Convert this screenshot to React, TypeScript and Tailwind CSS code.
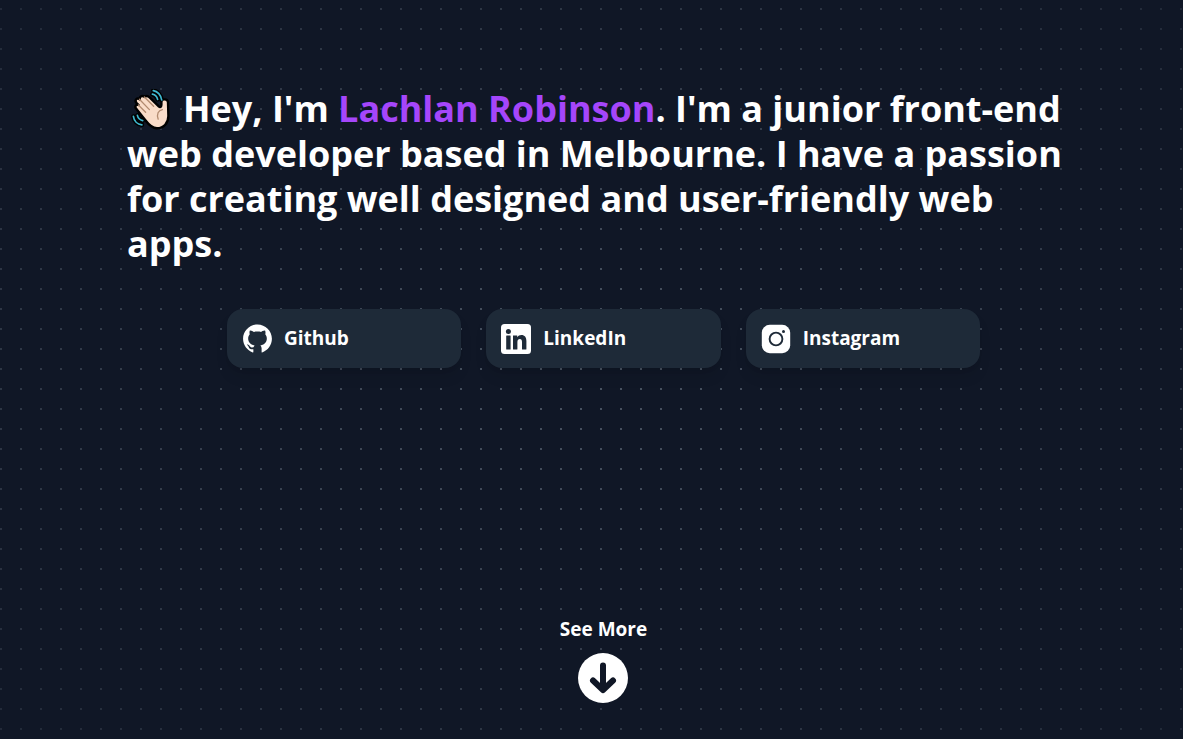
import { AiFillGithub } from "react-icons/ai";

function LinkedInIcon() {
  return (
    <svg viewBox="0 0 30 30" aria-hidden="true" className="size-[30px]">
      <rect width="30" height="30" rx="3.5" fill="#fff" />
      <g fill="#1e2a38">
        <circle cx="7.4" cy="7.6" r="2.5" />
        <rect x="5.2" y="11.4" width="4.4" height="14" rx="0.5" />
        <path d="M12 11.4h4.2v1.8c1-1.5 2.4-2.2 4.2-2.2 3.3 0 5 2.2 5 6v7.9a.5.5 0 0 1-.5.5h-3.4a.5.5 0 0 1-.5-.5v-6.8c0-2.2-.7-3.2-2.1-3.2-1.6 0-2.5 1.1-2.5 3.2v6.8a.5.5 0 0 1-.5.5h-3.4a.5.5 0 0 1-.5-.5z" />
      </g>
    </svg>
  );
}

function InstagramIcon() {
  return (
    <svg viewBox="0 0 30 30" aria-hidden="true" className="size-[30px]">
      <rect x="0.8" y="0.8" width="28.4" height="28.4" rx="8" fill="#fff" />
      <circle cx="15" cy="15" r="6.4" fill="none" stroke="#1e2a38" strokeWidth="1.9" />
      <circle cx="22.5" cy="7.5" r="1.5" fill="#1e2a38" />
    </svg>
  );
}

const links = [
  { name: "Github", href: "https://github.com", icon: <AiFillGithub size={33} className="shrink-0" /> },
  { name: "LinkedIn", href: "https://linkedin.com", icon: <LinkedInIcon /> },
  { name: "Instagram", href: "https://instagram.com", icon: <InstagramIcon /> },
];

const motionLines =
  "M22.3 1.6C26.5 2.2 30 6 30.7 11M21.4 5.2C24.2 5.8 26 7.8 26.6 10.4M2.4 27.4C3 32 6.4 35.4 10.9 35.8M6.4 26.4C7 29.2 9 31 11.7 31.6";

function WavingHand() {
  return (
    <svg
      viewBox="0 0 40 42"
      role="img"
      aria-label="Waving hand"
      className="mr-3 ml-1 inline-block h-[42px] w-10 align-[-9px]"
    >
      <path d={motionLines} fill="none" stroke="#000" strokeWidth="4.5" strokeLinecap="round" />
      <path
        d="M5.8 20.4C2.8 17.8 5 14.8 7.6 16L5.4 13.8C3.2 11 6 8.2 8.6 10.2C8.6 7 11.6 6 13.6 8C15 6.6 17 6.8 18.6 8.4L28 17.6C29.6 19 30.4 17.4 30.4 15.4V12.6C31 9.6 36.6 9.6 37 13.2L37.4 27C37.4 34 32.8 39.2 26 39.2C20.6 39.2 17.2 35 14.2 31Z"
        fill="#f9dcc8"
        stroke="#000"
        strokeWidth="2.4"
        strokeLinejoin="round"
      />
      <path
        d="M8.4 10.2L18.4 20.6M13.4 8L22.6 17.2M7.4 16L14.6 23.2M31.4 20.6C27.2 21.4 25.4 25 27.2 30.2"
        fill="none"
        stroke="#b28b70"
        strokeWidth="1.3"
        strokeLinecap="round"
      />
      <path d={motionLines} fill="none" stroke="#3fb8d0" strokeWidth="1.7" strokeLinecap="round" />
    </svg>
  );
}

export default function App() {
  return (
    <div className="relative isolate min-h-screen bg-[#101726] font-['Open_Sans','Noto_Sans',sans-serif] text-white">
      <div
        aria-hidden="true"
        className="absolute inset-0 -z-10 [background:conic-gradient(from_270deg_at_2px_2px,#4b5563_90deg,transparent_0)_0_8px/20px_20px] [mask-image:radial-gradient(ellipse_at_center,black_0%,rgba(0,0,0,0.3)_100%)]"
      />
      <main className="flex min-h-screen flex-col pt-[86px] pr-[103px] pb-9 pl-[127px]">
        <h1 className="text-4xl leading-[45px] font-bold">
          <WavingHand />
          Hey, I'm <span className="text-[#a546fb]">Lachlan Robinson</span>. I'm a junior front-end web developer based in
          Melbourne. I have a passion for creating well designed and user-friendly web apps.
        </h1>
        <nav aria-label="Social links" className="mx-auto mt-[43px] grid w-full max-w-[753px] grid-cols-3 gap-[25px]">
          {links.map((link) => (
            <a
              key={link.name}
              href={link.href}
              className="flex h-[59px] items-center gap-3 rounded-2xl bg-[#1e2a38] pl-[15px] text-[19px] font-bold shadow-lg"
            >
              <span className="flex w-[30px] shrink-0 justify-center">{link.icon}</span>
              {link.name}
            </a>
          ))}
        </nav>
        <a href="#projects" className="mx-auto mt-auto flex flex-col items-center gap-3 text-[19px] leading-6 font-bold">
          See More
          <svg viewBox="0 0 50 50" aria-hidden="true" className="size-[50px]">
            <circle cx="25" cy="25" r="25" fill="#fff" />
            <path
              d="M25 12.5v24M15 27.5l10 9.5 10-9.5"
              fill="none"
              stroke="#101726"
              strokeWidth="6"
              strokeLinecap="round"
              strokeLinejoin="round"
            />
          </svg>
        </a>
      </main>
    </div>
  );
}
